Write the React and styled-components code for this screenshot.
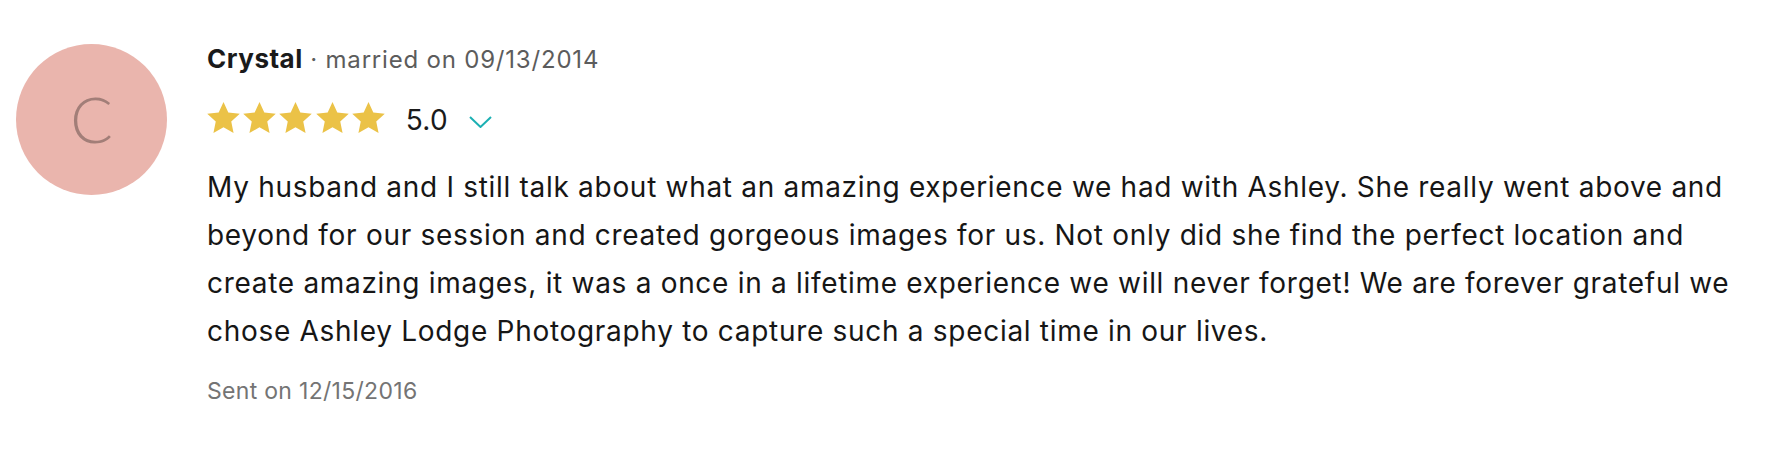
import React from "react";
import styled, { createGlobalStyle } from "styled-components";

const GlobalStyle = createGlobalStyle`
  html, body { margin: 0; padding: 0; background: #ffffff; }
  body { font-family: Inter, "Noto Sans", sans-serif; color: #1c1c1c; }
`;

const Review = styled.article`
  display: flex;
  align-items: flex-start;
  gap: 40px;
  padding: 44px 31px 0 16px;
`;

const Avatar = styled.div`
  flex: 0 0 151px;
  width: 151px;
  height: 151px;
  border-radius: 50%;
  background: #eab5ad;
  display: flex;
  align-items: center;
  justify-content: center;
  font-family: Lato, sans-serif;
  font-weight: 300;
  font-size: 63px;
  line-height: 1;
  color: #a27e78;
  padding-bottom: 2px;
  box-sizing: border-box;
`;

const Body = styled.div`
  flex: 1;
  min-width: 0;
  display: flex;
  flex-direction: column;
`;

const Header = styled.div`
  line-height: 30px;
  white-space: nowrap;
`;

const Name = styled.span`
  font-size: 26px;
  font-weight: 700;
  letter-spacing: 0.5px;
  color: #1a1a1a;
`;

const Meta = styled.span`
  font-size: 24px;
  font-weight: 400;
  letter-spacing: 0.8px;
  color: #5c5c5c;
`;

const RatingRow = styled.div`
  display: flex;
  align-items: flex-start;
  margin-top: 25px;
  height: 31px;
`;

const Stars = styled.div`
  display: flex;
  gap: 3.2px;
`;

const StarIcon = styled.svg`
  width: 33px;
  height: 31px;
  display: block;
  fill: #ebc247;
`;

const Score = styled.span`
  margin-left: 21px;
  margin-top: 3px;
  font-size: 28px;
  line-height: 30px;
  letter-spacing: 0.3px;
  color: #1a1a1a;
`;

const Chevron = styled.svg`
  margin-left: 21px;
  margin-top: 14px;
  width: 23px;
  height: 12px;
  display: block;
  fill: none;
  stroke: #1cb0b3;
  stroke-width: 2;
`;

const Text = styled.p`
  margin: 30px 0 0;
  font-size: 28px;
  line-height: 48px;
  letter-spacing: 0.7px;
  color: #161616;
`;

const Sent = styled.div`
  margin-top: 21px;
  font-size: 23px;
  line-height: 30px;
  letter-spacing: 0.3px;
  color: #747474;
`;

const Star = () => (
  <StarIcon viewBox="1.5 1.5 21 20">
    <polygon points="12,1.5 15.1,8.3 22.5,9.1 17,14.1 18.5,21.5 12,17.8 5.5,21.5 7,14.1 1.5,9.1 8.9,8.3" />
  </StarIcon>
);

export default function App() {
  return (
    <>
      <GlobalStyle />
      <Review>
        <Avatar>C</Avatar>
        <Body>
          <Header>
            <Name>Crystal</Name>
            <Meta> · married on 09/13/2014</Meta>
          </Header>
          <RatingRow>
            <Stars>
              {[0, 1, 2, 3, 4].map((i) => (
                <Star key={i} />
              ))}
            </Stars>
            <Score>5.0</Score>
            <Chevron viewBox="0 0 23 12">
              <polyline points="1,1 11.5,11 22,1" />
            </Chevron>
          </RatingRow>
          <Text>
            My husband and I still talk about what an amazing experience we had with Ashley. She really went above and
            beyond for our session and created gorgeous images for us. Not only did she find the perfect location and
            create amazing images, it was a once in a lifetime experience we will never forget! We are forever grateful
            we chose Ashley Lodge Photography to capture such a special time in our lives.
          </Text>
          <Sent>Sent on 12/15/2016</Sent>
        </Body>
      </Review>
    </>
  );
}
